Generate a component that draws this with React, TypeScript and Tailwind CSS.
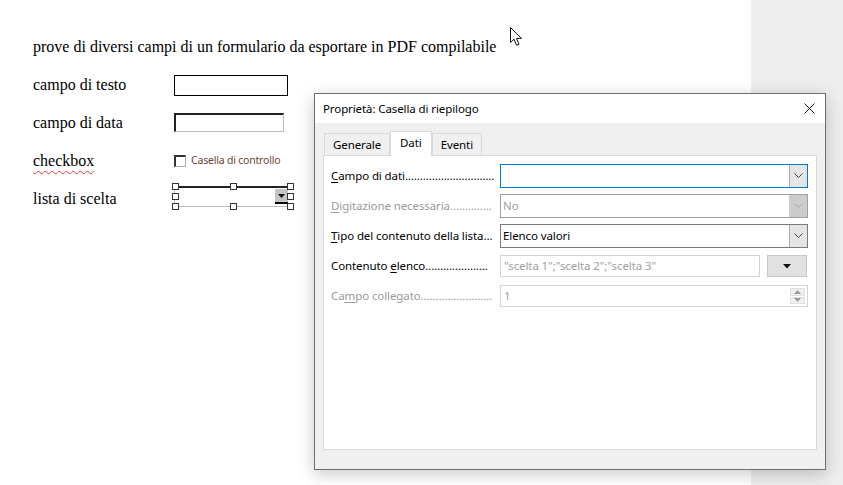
import React from 'react'

const serif = { fontFamily: '"Liberation Serif", "Times New Roman", serif' }
const ui = { fontFamily: '"Noto Sans", "Open Sans", sans-serif' }

function Handle() {
    return <div className="w-[7px] h-[7px] border border-[#333] bg-white" />
}

function Chevron({ color }: { color: string }) {
    return (
        <svg width="9" height="6" viewBox="0 0 9 6">
            <path d="M0.5 0.5 L4.5 4.5 L8.5 0.5" fill="none" stroke={color} strokeWidth="1" />
        </svg>
    )
}

function Combo({ value, focus, disabled }: { value?: string, focus?: boolean, disabled?: boolean }) {
    const border = focus ? 'border-[#0078d7]' : disabled ? 'border-[#a0a0a0]' : 'border-[#7a7a7a]'
    return (
        <div className={`flex h-[24px] w-[308px] border bg-white ${border}`}>
            <div className={`flex-1 px-[2px] leading-[22px] ${disabled ? 'text-[#a0a0a0]' : 'text-black'}`}>{value}</div>
            <div className={`w-[18px] flex items-center justify-center ${disabled ? 'bg-[#cccccc]' : 'bg-[#e5e5e5] border-l border-[#adadad]'}`}>
                <Chevron color={disabled ? '#a8a8a8' : '#444'} />
            </div>
        </div>
    )
}

function Label({ text, u, dots, disabled }: { text: string, u: number, dots: number, disabled?: boolean }) {
    return (
        <div className={`w-[162px] mr-[7px] whitespace-nowrap ${disabled ? 'text-[#9a9a9a]' : 'text-black'}`}>
            {text.slice(0, u)}<span className="underline underline-offset-2">{text[u]}</span>{text.slice(u + 1)}{'.'.repeat(dots)}
        </div>
    )
}

function Dialog() {
    return (
        <div className="absolute left-[314px] top-[93px] w-[512px] h-[377px] border border-[#6e6e6e] bg-[#f0f0f0] shadow-[0_4px_16px_rgba(0,0,0,0.22)] flex flex-col text-[11.5px] tracking-[-0.1px]" style={ui}>
            <div className="h-[29px] bg-white flex items-center justify-between pl-[8px] pr-[10px]">
                <span className="text-black">Proprietà: Casella di riepilogo</span>
                <svg width="11" height="11" viewBox="0 0 11 11">
                    <path d="M0.5 0.5 L10.5 10.5 M10.5 0.5 L0.5 10.5" stroke="#111" strokeWidth="1" />
                </svg>
            </div>

            <div className="flex flex-col flex-1 px-[8px] pt-[8px] pb-[19px]">
                <div className="flex items-end h-[24px] relative z-10 pl-[1px]">
                    <div className="h-[22px] px-[8px] border border-b-0 border-[#d9d9d9] bg-[#f0f0f0] flex items-center">Generale</div>
                    <div className="h-[25px] px-[9px] border border-b-0 border-[#d9d9d9] bg-white flex items-center -mb-[1px] pb-[3px]">Dati</div>
                    <div className="h-[22px] px-[8px] border border-b-0 border-[#d9d9d9] bg-[#f0f0f0] flex items-center">Eventi</div>
                </div>
                <div className="flex-1 bg-white border border-[#d9d9d9] pl-[7px] pr-[5px] pt-[8px] flex flex-col gap-[6px]">
                    <div className="flex items-center">
                        <Label text="Campo di dati" u={0} dots={30} />
                        <Combo focus />
                    </div>
                    <div className="flex items-center">
                        <Label text="Digitazione necessaria" u={0} dots={14} disabled />
                        <Combo value="No" disabled />
                    </div>
                    <div className="flex items-center">
                        <Label text="Tipo del contenuto della lista" u={0} dots={3} />
                        <Combo value="Elenco valori" />
                    </div>
                    <div className="flex items-center h-[24px]">
                        <Label text="Contenuto elenco" u={10} dots={21} />
                        <div className="w-[260px] h-[22px] border border-[#d3d3d3] px-[3px] leading-[20px] text-[#a0a0a0] whitespace-nowrap">"scelta 1";"scelta 2";"scelta 3"</div>
                        <div className="ml-[7px] w-[40px] h-[22px] bg-[#e1e1e1] border border-[#c8c8c8] flex items-center justify-center">
                            <svg width="8" height="5" viewBox="0 0 8 5"><path d="M0 0 H8 L4 4.5 Z" fill="#111" /></svg>
                        </div>
                    </div>
                    <div className="flex items-center h-[24px]">
                        <Label text="Campo collegato" u={2} dots={24} disabled />
                        <div className="w-[308px] h-[22px] border border-[#d3d3d3] flex">
                            <div className="flex-1 px-[3px] leading-[20px] text-[#a0a0a0]">1</div>
                            <div className="w-[15px] flex flex-col gap-[1px] my-[2px] mr-[2px]">
                                <div className="flex-1 bg-[#f0f0f0] border border-[#e0e0e0] flex items-center justify-center">
                                    <svg width="7" height="4" viewBox="0 0 7 4"><path d="M0 4 H7 L3.5 0 Z" fill="#9a9a9a" /></svg>
                                </div>
                                <div className="flex-1 bg-[#f0f0f0] border border-[#e0e0e0] flex items-center justify-center">
                                    <svg width="7" height="4" viewBox="0 0 7 4"><path d="M0 0 H7 L3.5 4 Z" fill="#9a9a9a" /></svg>
                                </div>
                            </div>
                        </div>
                    </div>
                </div>
            </div>
        </div>
    )
}

export default function App() {
    return (
        <div className="relative w-[843px] h-[485px] overflow-hidden flex bg-white">
            <div className="w-[751px] h-full bg-white pl-[33px] pt-[36px] text-[16px] text-black" style={serif}>
                <div className="h-[22px] leading-[22px]">prove di diversi campi di un formulario da esportare in PDF compilabile</div>
                <div className="grid grid-cols-[141px_1fr] auto-rows-[38px] mt-[16px]">
                    <div className="leading-[22px]">campo di testo</div>
                    <div className="pt-[1px]">
                        <div className="w-[114px] h-[21px] border border-black" />
                    </div>

                    <div className="leading-[22px]">campo di data</div>
                    <div className="pt-[1px]">
                        <div className="w-[110px] h-[19px] border-t-2 border-l-2 border-t-[#222] border-l-[#222] border-r border-b border-r-[#bbb] border-b-[#bbb]" />
                    </div>

                    <div className="leading-[22px]">
                        <span className="underline decoration-wavy decoration-[#e03c3c] decoration-1 underline-offset-4">checkbox</span>
                    </div>
                    <div className="flex items-center h-[22px] gap-[5px]">
                        <div className="w-[12px] h-[12px] border border-[#aaa] border-t-[#333] border-l-[#333] border-t-2 border-l-2 bg-white" />
                        <span className="text-[10.5px] tracking-[-0.2px] text-[#6a4336]" style={ui}>Casella di controllo</span>
                    </div>

                    <div className="leading-[22px]">lista di scelta</div>
                    <div className="relative">
                        <div className="absolute left-0 top-[-2px] w-[118px] h-[21px] border-t-2 border-[#222] border-b border-b-[#bbb] border-l border-l-[#bbb]">
                            <div className="absolute right-[4px] top-[1px] w-[13px] h-[15px] bg-[#c4c4c4] border-b-2 border-black flex items-center justify-center">
                                <svg width="7" height="4" viewBox="0 0 7 4"><path d="M0 0 H7 L3.5 4 Z" fill="#111" /></svg>
                            </div>
                        </div>
                        <div className="absolute left-[-2px] top-[-5px] w-[122px] h-[27px] flex flex-col justify-between">
                            <div className="flex justify-between"><Handle /><Handle /><Handle /></div>
                            <div className="flex justify-between"><Handle /><Handle /></div>
                            <div className="flex justify-between"><Handle /><Handle /><Handle /></div>
                        </div>
                    </div>
                </div>
            </div>
            <div className="flex-1 h-full bg-[#eeeeee]" />

            <svg className="absolute left-[510px] top-[27px]" width="14" height="20" viewBox="0 0 14 20">
                <path d="M0.5 0.5 L0.5 15.5 L4 12.2 L6.6 18.3 L9 17.3 L6.5 11.4 L11.5 11.4 Z" fill="white" stroke="#111" strokeWidth="1" strokeLinejoin="round" />
            </svg>

            <Dialog />
        </div>
    )
}
